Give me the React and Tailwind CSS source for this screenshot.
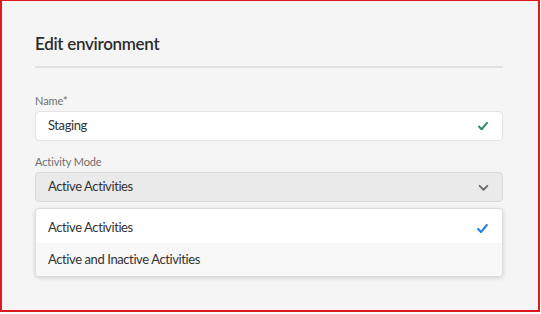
import React from 'react'

function Check({ className }) {
  return (
    <svg className={className} viewBox="0 0 12 12" fill="none" stroke="currentColor" strokeWidth={2} strokeLinecap="round" strokeLinejoin="round">
      <path d="M2 6.5l2.6 2.8L10 2.8" />
    </svg>
  )
}

function Chevron({ className }) {
  return (
    <svg className={className} viewBox="0 0 10 10" fill="none" stroke="currentColor" strokeWidth={1.8} strokeLinecap="round" strokeLinejoin="round">
      <path d="M1.5 3.5L5 7l3.5-3.5" />
    </svg>
  )
}

export default function App() {
  return (
    <div className="w-[541px] h-[314px] bg-white" style={{ fontFamily: 'Lato, "Noto Sans", sans-serif' }}>
      <div className="relative w-[540px] h-[312px] border-l-2 border-t border-r-2 border-b-2 border-[#e0191c] bg-[#f5f5f5] pl-[33px] pr-[35px] pt-[31px]">
        {/* Header */}
        <h1 className="text-[17px] leading-[24px] font-semibold tracking-[-0.3px] text-[#2c2c2c]">Edit environment</h1>
        <div className="mt-[10px] h-[2px] bg-[#e1e1e1]" />

        {/* Name */}
        <label className="block mt-[26px] text-[11px] leading-[14px] tracking-[-0.1px] text-[#6e6e6e]">Name*</label>
        <div className="mt-[3px] h-[30px] flex items-center justify-between bg-white border border-[#e3e3e3] rounded-[4px] pl-[12px] pr-[13px]">
          <span className="text-[13px] tracking-[-0.4px] text-[#323232]">Staging</span>
          <Check className="w-[12px] h-[12px] text-[#268e6c]" />
        </div>

        {/* Activity mode */}
        <label className="block mt-[14px] text-[11px] leading-[14px] tracking-[-0.1px] text-[#6e6e6e]">Activity Mode</label>
        <div className="mt-[3px] h-[30px] flex items-center justify-between bg-[#eaeaea] border border-[#d9d9d9] rounded-[4px] pl-[12px] pr-[13px]">
          <span className="text-[13px] tracking-[-0.4px] text-[#323232]">Active Activities</span>
          <Chevron className="w-[11px] h-[11px] text-[#6e6e6e]" />
        </div>

        {/* Popover */}
        <div className="absolute left-[33px] top-[207px] w-[468px] pt-[4px] bg-white border border-[#dcdcdc] rounded-[4px] shadow-[0_1px_4px_rgba(0,0,0,0.15)] overflow-hidden">
          <div className="h-[30px] flex items-center justify-between pl-[12px] pr-[13px] bg-white">
            <span className="text-[13px] tracking-[-0.4px] text-[#323232]">Active Activities</span>
            <Check className="w-[13px] h-[13px] text-[#2680eb]" />
          </div>
          <div className="h-[33px] flex items-center pl-[12px] bg-[#f8f8f8]">
            <span className="text-[13px] tracking-[-0.4px] text-[#323232]">Active and Inactive Activities</span>
          </div>
        </div>
      </div>
    </div>
  )
}
